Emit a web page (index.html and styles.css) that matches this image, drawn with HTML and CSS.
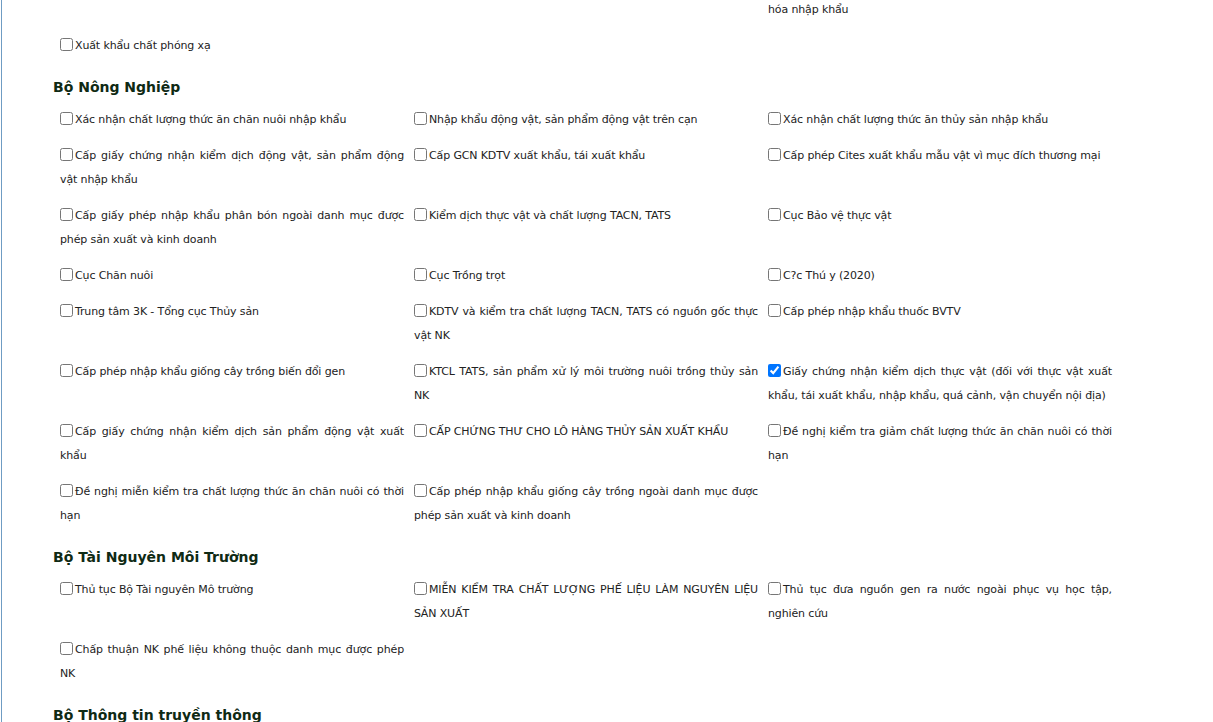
FILE: index.html
```html
<!DOCTYPE html>
<html lang="vi">
<head>
    <meta charset="UTF-8">
    <meta name="viewport" content="width=device-width, initial-scale=1.0">
    <title>Danh sách thủ tục</title>
    <link rel="stylesheet" href="styles.css">
</head>
<body>
    <div class="page">
        <!-- tail of the previous ministry list -->
        <div class="proc-list">
            <div class="proc-item"></div>
            <div class="proc-item"></div>
            <div class="proc-item">hóa nhập khẩu</div>
            <label class="proc-item"><input type="checkbox">Xuất khẩu chất phóng xạ</label>
        </div>

        <h3 class="ministry">Bộ Nông Nghiệp</h3>
        <div class="proc-list">
            <label class="proc-item"><input type="checkbox">Xác nhận chất lượng thức ăn chăn nuôi nhập khẩu</label>
            <label class="proc-item"><input type="checkbox">Nhập khẩu động vật, sản phẩm động vật trên cạn</label>
            <label class="proc-item"><input type="checkbox">Xác nhận chất lượng thức ăn thủy sản nhập khẩu</label>
            <label class="proc-item"><input type="checkbox">Cấp giấy chứng nhận kiểm dịch động vật, sản phẩm động vật nhập khẩu</label>
            <label class="proc-item"><input type="checkbox">Cấp GCN KDTV xuất khẩu, tái xuất khẩu</label>
            <label class="proc-item"><input type="checkbox">Cấp phép Cites xuất khẩu mẫu vật vì mục đích thương mại</label>
            <label class="proc-item"><input type="checkbox">Cấp giấy phép nhập khẩu phân bón ngoài danh mục được phép sản xuất và kinh doanh</label>
            <label class="proc-item"><input type="checkbox">Kiểm dịch thực vật và chất lượng TACN, TATS</label>
            <label class="proc-item"><input type="checkbox">Cục Bảo vệ thực vật</label>
            <label class="proc-item"><input type="checkbox">Cục Chăn nuôi</label>
            <label class="proc-item"><input type="checkbox">Cục Trồng trọt</label>
            <label class="proc-item"><input type="checkbox">C?c Thú y (2020)</label>
            <label class="proc-item"><input type="checkbox">Trung tâm 3K - Tổng cục Thủy sản</label>
            <label class="proc-item"><input type="checkbox">KDTV và kiểm tra chất lượng TACN, TATS có nguồn gốc thực vật NK</label>
            <label class="proc-item"><input type="checkbox">Cấp phép nhập khẩu thuốc BVTV</label>
            <label class="proc-item"><input type="checkbox">Cấp phép nhập khẩu giống cây trồng biến đổi gen</label>
            <label class="proc-item"><input type="checkbox">KTCL TATS, sản phẩm xử lý môi trường nuôi trồng thủy sản NK</label>
            <label class="proc-item"><input type="checkbox" checked>Giấy chứng nhận kiểm dịch thực vật (đối với thực vật xuất khẩu, tái xuất khẩu, nhập khẩu, quá cảnh, vận chuyển nội địa)</label>
            <label class="proc-item"><input type="checkbox">Cấp giấy chứng nhận kiểm dịch sản phẩm động vật xuất khẩu</label>
            <label class="proc-item"><input type="checkbox">CẤP CHỨNG THƯ CHO LÔ HÀNG THỦY SẢN XUẤT KHẨU</label>
            <label class="proc-item"><input type="checkbox">Đề nghị kiểm tra giảm chất lượng thức ăn chăn nuôi có thời hạn</label>
            <label class="proc-item"><input type="checkbox">Đề nghị miễn kiểm tra chất lượng thức ăn chăn nuôi có thời hạn</label>
            <label class="proc-item"><input type="checkbox">Cấp phép nhập khẩu giống cây trồng ngoài danh mục được phép sản xuất và kinh doanh</label>
        </div>

        <h3 class="ministry">Bộ Tài Nguyên Môi Trường</h3>
        <div class="proc-list">
            <label class="proc-item"><input type="checkbox">Thủ tục Bộ Tài nguyên Mô trường</label>
            <label class="proc-item"><input type="checkbox">MIỄN KIỂM TRA CHẤT LƯỢNG PHẾ LIỆU LÀM NGUYÊN LIỆU SẢN XUẤT</label>
            <label class="proc-item"><input type="checkbox">Thủ tục đưa nguồn gen ra nước ngoài phục vụ học tập, nghiên cứu</label>
            <label class="proc-item"><input type="checkbox">Chấp thuận NK phế liệu không thuộc danh mục được phép NK</label>
        </div>

        <h3 class="ministry">Bộ Thông tin truyền thông</h3>
    </div>
</body>
</html>
```

FILE: styles.css
```css
html, body {
    margin: 0;
    padding: 0;
    overflow: hidden;
    background: #fff;
}

body {
    font-family: "DejaVu Sans", Verdana, sans-serif;
    font-size: 11px;
    letter-spacing: -0.13px;
    color: #222;
}

.page {
    margin-top: -2px;
    margin-left: 1px;
    border-left: 1px solid #6f9cc3;
    padding: 0 0 0 51px;
    min-height: 100vh;
}

/* Ministry heading */
.ministry {
    margin: 7px 0 11px 0;
    font-size: 14px;
    line-height: 20px;
    font-weight: bold;
    letter-spacing: 0;
    color: #0f2a14;
}

/* Procedures grid */
.proc-list {
    display: grid;
    grid-template-columns: repeat(3, 354px);
    margin-left: 7px;
}

.proc-item {
    display: block;
    padding-right: 10px;
    margin-bottom: 12px;
    line-height: 24px;
    text-align: justify;
    cursor: pointer;
}

.proc-item input {
    width: 13px;
    height: 13px;
    margin: 0 2px 0 0;
    vertical-align: -2px;
}
```
